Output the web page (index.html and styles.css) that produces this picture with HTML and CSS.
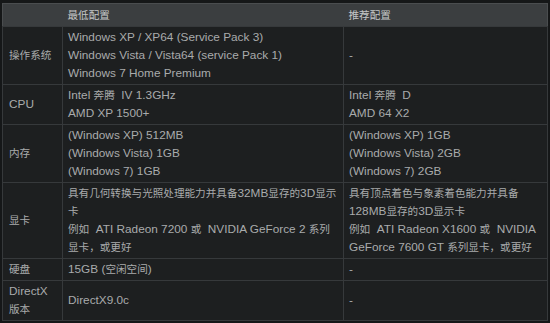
FILE: index.html
```html
<!DOCTYPE html>
<html lang="zh">
<head>
<meta charset="utf-8">
<link rel="stylesheet" href="styles.css">
</head>
<body>
<table class="spec">
  <colgroup>
    <col class="c1"><col class="c2"><col class="c3">
  </colgroup>
  <thead>
    <tr><th></th><th><span class="zh">最低配置</span></th><th><span class="zh">推荐配置</span></th></tr>
  </thead>
  <tbody>
    <tr>
      <td class="label"><span class="zh">操作系统</span></td>
      <td>Windows XP / XP64 (Service Pack 3)<br>Windows Vista / Vista64 (service Pack 1)<br>Windows 7 Home Premium</td>
      <td>-</td>
    </tr>
    <tr>
      <td class="label">CPU</td>
      <td>Intel <span class="zh">奔腾</span>&nbsp; IV 1.3GHz<br>AMD XP 1500+</td>
      <td>Intel <span class="zh">奔腾</span>&nbsp; D<br>AMD 64 X2</td>
    </tr>
    <tr>
      <td class="label"><span class="zh">内存</span></td>
      <td>(Windows XP) 512MB<br>(Windows Vista) 1GB<br>(Windows 7) 1GB</td>
      <td>(Windows XP) 1GB<br>(Windows Vista) 2GB<br>(Windows 7) 2GB</td>
    </tr>
    <tr>
      <td class="label"><span class="zh">显卡</span></td>
      <td><span class="zh">具有几何转换与光照处理能力并具备</span>32MB<span class="zh">显存的</span>3D<span class="zh">显示</span><br><span class="zh">卡</span><br><span class="zh">例如</span>&nbsp; ATI Radeon 7200 <span class="zh">或</span>&nbsp; NVIDIA GeForce 2 <span class="zh">系列</span><br><span class="zh">显卡，或更好</span></td>
      <td><span class="zh">具有顶点着色与象素着色能力并具备</span><br>128MB<span class="zh">显存的</span>3D<span class="zh">显示卡</span><br><span class="zh">例如</span>&nbsp; ATI Radeon X1600 <span class="zh">或</span>&nbsp; NVIDIA<br>GeForce 7600 GT <span class="zh">系列显卡，或更好</span></td>
    </tr>
    <tr>
      <td class="label"><span class="zh">硬盘</span></td>
      <td>15GB (<span class="zh">空闲空间</span>)</td>
      <td>-</td>
    </tr>
    <tr>
      <td class="label">DirectX<br><span class="zh">版本</span></td>
      <td>DirectX9.0c</td>
      <td>-</td>
    </tr>
  </tbody>
</table>
</body>
</html>
```

FILE: styles.css
```css
html, body {
  margin: 0;
  padding: 0;
  background: #151718;
}
body {
  padding: 3px 3px 0 2px;
  font-family: "Liberation Sans", Arial, "Noto Sans CJK SC", sans-serif;
  font-size: 11.8px;
  line-height: 18px;
  color: #a9abac;
}
.zh {
  font-family: "Noto Sans CJK SC", sans-serif;
  font-size: 10.6px;
}
.spec {
  width: 545px;
  border-collapse: collapse;
  table-layout: fixed;
  background: #1d1f20;
  border: 1px solid #4a4d4f;
}
.c1 { width: 60px; }
.c2 { width: 281px; }
.c3 { width: 204px; }
.spec th {
  background: #3b3e40;
  color: #c4c6c7;
  font-weight: normal;
  text-align: left;
  padding: 2px 5px;
  height: 18px;
}
.spec td {
  border: 1px solid #36393b;
  padding: 1px 5px 2px;
  vertical-align: middle;
  white-space: nowrap;
  overflow: hidden;
}
.spec td.label {
  padding-left: 6px;
}
```
